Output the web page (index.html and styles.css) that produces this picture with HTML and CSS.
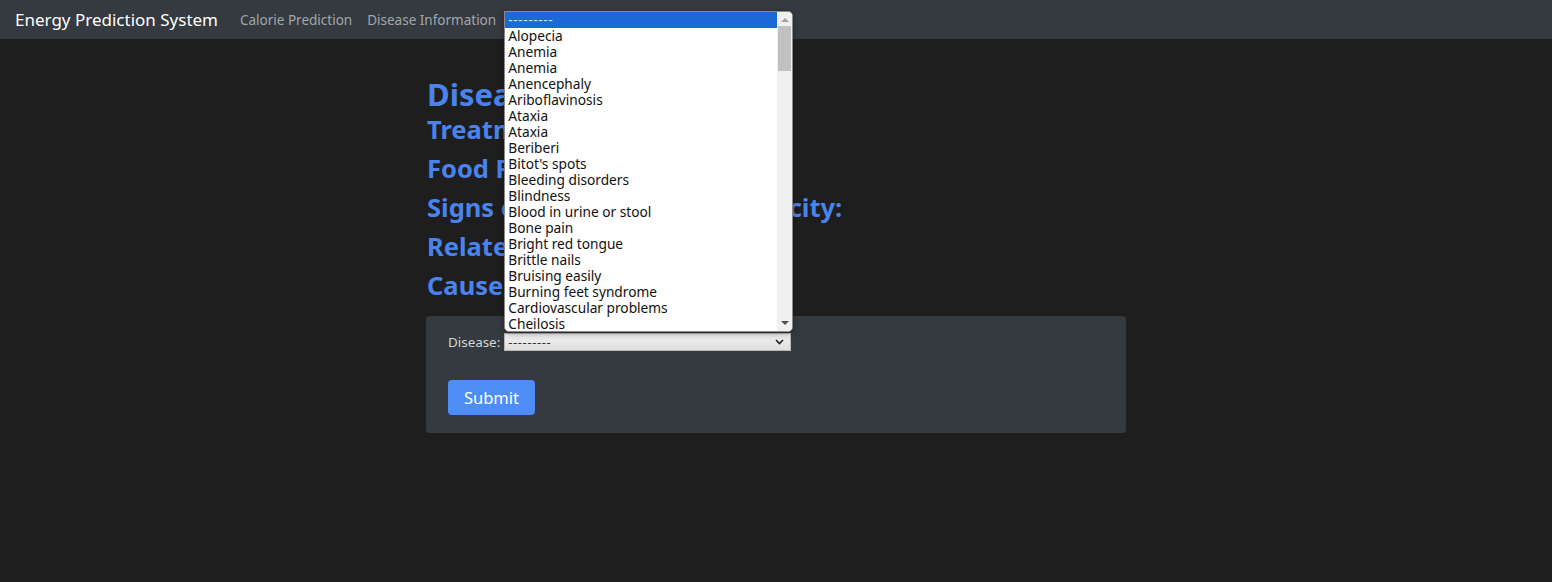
FILE: index.html
```html
<!DOCTYPE html>
<html lang="en">
<head>
<meta charset="utf-8">
<title>Disease Information</title>
<link rel="stylesheet" href="styles.css">
</head>
<body>
<nav class="navbar">
  <a class="brand" href="#">Energy Prediction System</a>
  <a class="nav-link" href="#">Calorie Prediction</a>
  <a class="nav-link" href="#">Disease Information</a>
</nav>
<main class="container">
  <h1 class="title">Disease:</h1>
  <h2 class="sub">Treatment:</h2>
  <h2 class="sub">Food Recommendations:</h2>
  <h2 class="sub">Signs of Deficiency or of Toxicity:</h2>
  <h2 class="sub">Related Nutrients:</h2>
  <h2 class="sub">Causes:</h2>
  <form class="card">
    <div class="field">
      <label class="label" for="disease">Disease:</label>
      <div class="select-wrap">
        <div class="select" id="disease">
          <span class="select-value">---------</span>
          <svg class="chev" width="9" height="6" viewBox="0 0 9 6"><path d="M1 1 L4.5 4.5 L8 1" fill="none" stroke="#222" stroke-width="1.6"/></svg>
        </div>
        <div class="popup">
          <ul class="options">
            <li class="opt selected">---------</li>
            <li class="opt">Alopecia</li>
            <li class="opt">Anemia</li>
            <li class="opt">Anemia</li>
            <li class="opt">Anencephaly</li>
            <li class="opt">Ariboflavinosis</li>
            <li class="opt">Ataxia</li>
            <li class="opt">Ataxia</li>
            <li class="opt">Beriberi</li>
            <li class="opt">Bitot's spots</li>
            <li class="opt">Bleeding disorders</li>
            <li class="opt">Blindness</li>
            <li class="opt">Blood in urine or stool</li>
            <li class="opt">Bone pain</li>
            <li class="opt">Bright red tongue</li>
            <li class="opt">Brittle nails</li>
            <li class="opt">Bruising easily</li>
            <li class="opt">Burning feet syndrome</li>
            <li class="opt">Cardiovascular problems</li>
            <li class="opt">Cheilosis</li>
          </ul>
          <div class="scrollbar">
            <span class="arrow up"></span>
            <div class="track"><div class="thumb"></div></div>
            <span class="arrow down"></span>
          </div>
        </div>
      </div>
    </div>
    <button class="btn" type="button">Submit</button>
  </form>
</main>
</body>
</html>
```
FILE: styles.css
```css
* { box-sizing: border-box; }
html, body { margin: 0; padding: 0; }
body {
  background: #1e1e1e;
  font-family: "Noto Sans", "Open Sans", sans-serif;
  color: #fff;
  height: 582px;
  overflow: hidden;
}
.navbar {
  height: 39px;
  background: #343a40;
  display: flex;
  align-items: center;
  padding: 0 15px;
  gap: 15px;
}
.brand {
  color: #fff;
  text-decoration: none;
  font-size: 17px;
  margin-right: 7px;
}
.nav-link {
  color: #a3a6a9;
  text-decoration: none;
  font-size: 13.5px;
}
.container {
  width: 700px;
  margin: 0 auto;
  padding-top: 38px;
}
.title {
  margin: 0 0 4px 1px;
  font-size: 31px;
  line-height: 34px;
  font-weight: 700;
  color: #4a83ec;
}
.sub {
  margin: 0 0 10px 1px;
  font-size: 25.5px;
  line-height: 29px;
  font-weight: 700;
  color: #4a83ec;
  white-space: nowrap;
}
.card {
  margin-top: 16px;
  background: #343a40;
  border-radius: 4px;
  padding: 17px 22px 18px;
}
.field {
  display: flex;
  align-items: center;
  gap: 4px;
}
.label {
  font-size: 13.4px;
  color: #d6d7d8;
}
.select-wrap { position: relative; }
.select {
  width: 287px;
  height: 18px;
  background: linear-gradient(#f4f4f4, #dedede);
  border: 1px solid #b8b8b8;
  display: flex;
  align-items: center;
  justify-content: space-between;
  padding: 0 6px 0 3px;
  font-size: 13px;
  color: #333;
}
.select-value { letter-spacing: 0.6px; }
.btn {
  margin-top: 29px;
  background: #4e8cf6;
  color: #fff;
  border: none;
  border-radius: 4px;
  font-family: inherit;
  font-size: 16.5px;
  padding: 0;
  height: 35px;
  width: 87px;
}
.popup {
  position: absolute;
  left: 0;
  bottom: calc(100% + 1px);
  width: 289px;
  height: 321px;
  background: #fff;
  border: 1px solid #8a8a8a;
  border-radius: 0 5px 5px 5px;
  display: flex;
  overflow: hidden;
  box-shadow: 0 2px 6px rgba(0,0,0,0.35);
}
.options {
  list-style: none;
  margin: 0;
  padding: 0;
  flex: 1;
  color: #111;
  font-size: 13.7px;
}
.opt {
  height: 16px;
  line-height: 16px;
  padding-left: 3px;
  white-space: nowrap;
}
.opt.selected {
  background: #1a69d6;
  color: #cfdcf2;
  letter-spacing: 0.6px;
}
.scrollbar {
  width: 15px;
  background: #f0f0f0;
  display: flex;
  flex-direction: column;
  align-items: center;
}
.arrow {
  width: 0;
  height: 0;
  border-left: 4px solid transparent;
  border-right: 4px solid transparent;
  margin: 6px 0;
}
.arrow.up { border-bottom: 4px solid #a3a3a3; }
.arrow.down { border-top: 4px solid #505050; }
.track { flex: 1; width: 100%; padding: 0 1px; }
.thumb {
  height: 45px;
  background: #c1c1c1;
  margin-top: -2px;
}
```
